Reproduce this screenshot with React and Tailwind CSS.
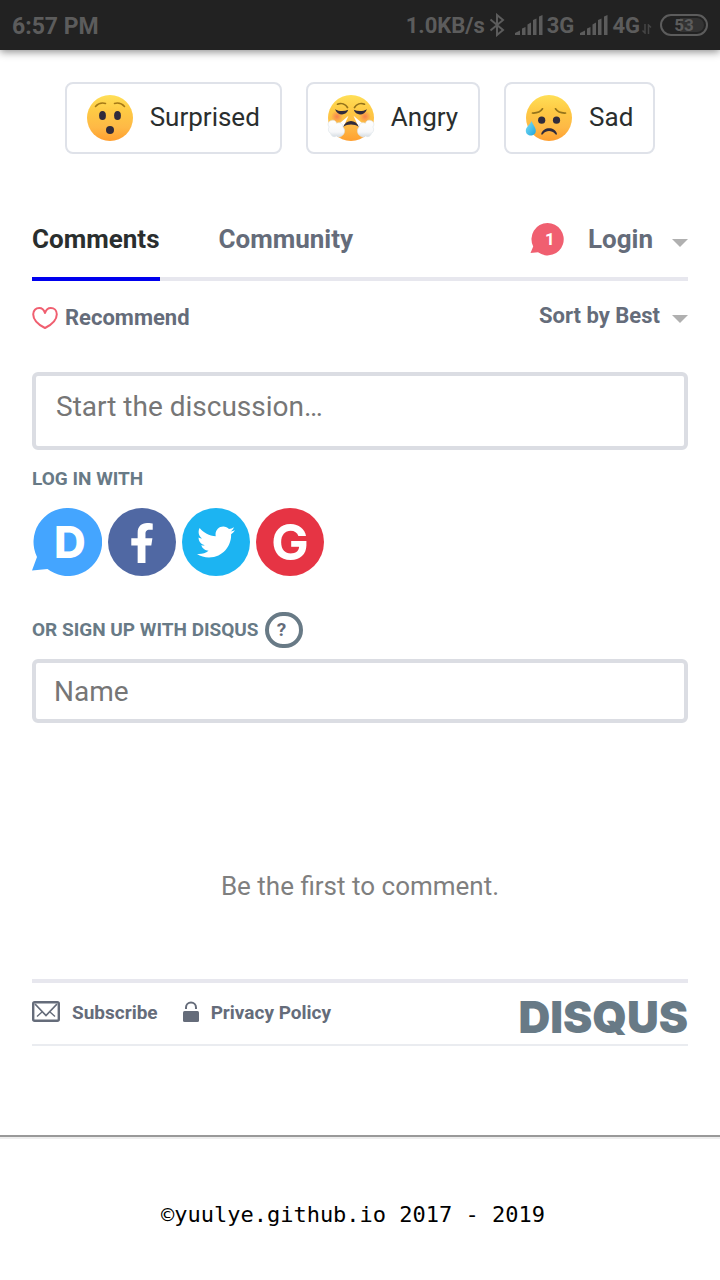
import React from "react";
import { FaFacebookF, FaTwitter } from "react-icons/fa";

function FaceBase({ id, children }) {
  return (
    <svg viewBox="0 0 46 46" className="size-[46px] shrink-0 overflow-visible" aria-hidden="true">
      <defs>
        <linearGradient id={id} x1="0" y1="0" x2="0" y2="1">
          <stop offset="0" stopColor="#ffdf57" />
          <stop offset="0.35" stopColor="#fec944" />
          <stop offset="0.7" stopColor="#feb946" />
          <stop offset="1" stopColor="#ff9f2f" />
        </linearGradient>
      </defs>
      <circle cx="23" cy="23" r="23" fill={`url(#${id})`} />
      {children}
    </svg>
  );
}

function SurprisedFace() {
  return (
    <FaceBase id="face-surprised">
      <g fill="none" stroke="#a57a17" strokeWidth="1.6" strokeLinecap="round">
        <path d="M8.5 11.5C11 8.6 15 7.5 18.5 8.4" />
        <path d="M27.5 8.4C31 7.5 35 8.6 37.5 11.5" />
      </g>
      <ellipse cx="15.5" cy="20.5" rx="3.4" ry="4.6" fill="#302b3c" />
      <ellipse cx="30.5" cy="20.5" rx="3.4" ry="4.6" fill="#302b3c" />
      <circle cx="23" cy="35" r="4" fill="#302b3c" />
    </FaceBase>
  );
}

function AngryFace() {
  return (
    <FaceBase id="face-angry">
      <defs>
        <radialGradient id="blush">
          <stop offset="0" stopColor="#f56d51" stopOpacity="0.75" />
          <stop offset="1" stopColor="#f56d51" stopOpacity="0" />
        </radialGradient>
        <linearGradient id="steam" x1="0" y1="0" x2="0" y2="1">
          <stop offset="0" stopColor="#ffffff" />
          <stop offset="0.7" stopColor="#f7f8fa" />
          <stop offset="1" stopColor="#d5dce2" />
        </linearGradient>
      </defs>
      <circle cx="9" cy="21.5" r="6" fill="url(#blush)" />
      <circle cx="37" cy="21.5" r="6" fill="url(#blush)" />
      <g fill="none" stroke="#94731b" strokeWidth="1.7" strokeLinecap="round">
        <path d="M9.5 9.2C13.5 7.6 17.5 9.2 19.5 12.5" />
        <path d="M36.5 9.2C32.5 7.6 28.5 9.2 26.5 12.5" />
      </g>
      <path d="M7 14.2C11 16.6 16 16.6 20.2 14.8C18.5 21 9.5 21.2 7 14.2Z" fill="#302b3c" />
      <path d="M39 14.2C35 16.6 30 16.6 25.8 14.8C27.5 21 36.5 21.2 39 14.2Z" fill="#302b3c" />
      <path d="M20.5 20.8L15 33L9 30.5Z" fill="#fff" />
      <path d="M25.5 20.8L31 33L37 30.5Z" fill="#fff" />
      <path d="M15 32C18 24 28 24 31 32C26 28.8 20 28.8 15 32Z" fill="#302b3c" />
      <g fill="url(#steam)" stroke="#dce2e7" strokeWidth="0.6">
        <path d="M2.5 25.8C5.5 24.3 8 25.8 8.5 28.3C12 26.6 15.3 28.8 14.8 32.2C17.5 34 17 39 14 40.6C12.6 42.7 9.6 42 8.4 41C6 42.6 3 41 2.8 38.5C.3 37.2-.3 34 1.2 32C-.8 29.7.2 26.8 2.5 25.8Z" />
        <path d="M43.5 25.8C40.5 24.3 38 25.8 37.5 28.3C34 26.6 30.7 28.8 31.2 32.2C28.5 34 29 39 32 40.6C33.4 42.7 36.4 42 37.6 41C40 42.6 43 41 43.2 38.5C45.7 37.2 46.3 34 44.8 32C46.8 29.7 45.8 26.8 43.5 25.8Z" />
      </g>
    </FaceBase>
  );
}

function SadFace() {
  return (
    <FaceBase id="face-sad">
      <defs>
        <linearGradient id="tear" x1="0" y1="0" x2="1" y2="1">
          <stop offset="0" stopColor="#7ee0f7" />
          <stop offset="1" stopColor="#20a5dc" />
        </linearGradient>
      </defs>
      <g fill="none" stroke="#94731b" strokeWidth="1.7" strokeLinecap="round">
        <path d="M6.5 18C10.5 18.2 14.5 16.8 16.5 13.8" />
        <path d="M39.5 18C35.5 18.2 31.5 16.8 29.5 13.8" />
      </g>
      <circle cx="15.7" cy="25.2" r="3.6" fill="#302b3c" />
      <circle cx="30.5" cy="25.2" r="3.6" fill="#302b3c" />
      <path
        d="M15.2 39C17.2 31.4 29.2 31.4 31 39C30.6 40.2 29.8 39.8 29 38.8C25.8 35.2 20.2 35.2 17.2 38.8C16.3 39.9 15.5 40.2 15.2 39Z"
        fill="#302b3c"
      />
      <path d="M5.6 26C6.6 29.6 10 32.4 9.8 36C9.6 42-.2 42-.2 35.7C-.2 32 4.3 29.4 5.6 26Z" fill="url(#tear)" />
    </FaceBase>
  );
}

function Signal() {
  return (
    <svg viewBox="0 0 28 20" className="h-5 w-7 shrink-0" fill="#5c5c5c" aria-hidden="true">
      <path d="M0 20V18L5 15.5V20ZM7 13.5L10.5 12V20H7ZM12.5 9.5L16 7.5V20H12.5ZM18 5L21.5 3.5V20H18ZM24 1.5L27.5 0V20H24Z" />
    </svg>
  );
}

function StatusBar() {
  return (
    <header className="flex h-[50px] items-center justify-between bg-[#222222] px-3 text-[23px] leading-none font-bold text-[#5c5c5c] shadow-[0_2px_8px_rgba(0,0,0,0.45)]">
      <span className="pt-0.5">6:57 PM</span>
      <div className="flex items-center text-[22px]">
        <span className="pt-0.5">1.0KB/s</span>
        <svg viewBox="0 0 16 24" className="mr-2.5 ml-1 h-6 w-4" fill="none" stroke="#5c5c5c" strokeWidth="2" aria-hidden="true">
          <path d="M1.5 6.5L14 17L8 22V2L14 7L1.5 17.5" />
        </svg>
        <Signal />
        <span className="mr-1.5 ml-1 pt-0.5">3G</span>
        <Signal />
        <span className="ml-1 pt-0.5">4G</span>
        <svg viewBox="0 0 10 10" className="mt-2 ml-0.5 h-2.5 w-2.5" fill="none" stroke="#454545" strokeWidth="1.5" aria-hidden="true">
          <path d="M3 0V9L0.5 6.5M6.5 10V1L9 3.5" />
        </svg>
        <span className="relative ml-2 flex h-[22px] w-12 items-center justify-center rounded-full border-2 border-[#5c5c5c] text-[17px] leading-none">
          <span className="absolute inset-y-0.5 right-0.5 w-6 rounded-r-full bg-[#333333]" />
          <span className="relative">53</span>
        </span>
      </div>
    </header>
  );
}

function Reaction({ face, label }) {
  return (
    <button
      type="button"
      className="flex h-[72px] items-center gap-[17px] rounded-lg border-2 border-[#dfe2e9] px-5 text-[26px] leading-8 text-[#2a2e2e]"
    >
      {face}
      <span className="pb-0.5">{label}</span>
    </button>
  );
}

function Caret() {
  return (
    <svg viewBox="0 0 16 8" className="h-2 w-4 shrink-0" fill="#b0b0b0" aria-hidden="true">
      <path d="M0 0H16L8 8Z" />
    </svg>
  );
}

const circle = "flex size-[68px] items-center justify-center rounded-full text-white";

export default function App() {
  return (
    <div className="min-h-screen bg-white font-['Roboto',sans-serif] text-[#656c7a]">
      <StatusBar />

      <main>
        <div className="flex justify-center gap-6 pt-8">
          <Reaction face={<SurprisedFace />} label="Surprised" />
          <Reaction face={<AngryFace />} label="Angry" />
          <Reaction face={<SadFace />} label="Sad" />
        </div>

        <section className="px-8 pt-[66px]">
          <nav className="flex h-[61px] justify-between border-b-4 border-[#e7e7ee] text-[26px] leading-[38px] font-bold">
            <div className="flex gap-[59px]">
              <a href="#comments" className="-mb-1 border-b-4 border-[#0000ee] text-[#2a2e2e]">
                Comments
              </a>
              <a href="#community">Community</a>
            </div>
            <div className="flex h-[38px] items-center">
              <button type="button" aria-label="1 notification" className="relative mr-6 size-[34px]">
                <svg viewBox="0 0 34 34" className="size-[34px]" fill="#f05f70" aria-hidden="true">
                  <path d="M17.5 1A16.2 16.2 0 1 1 8 30.3L0.5 31L3.2 24.5A16.2 16.2 0 0 1 17.5 1Z" />
                </svg>
                <span className="absolute inset-0 pl-1.5 text-center text-[17px] leading-[34px] text-white">1</span>
              </button>
              <button type="button" className="flex items-center gap-[19px]">
                Login
                <span className="pt-2">
                  <Caret />
                </span>
              </button>
            </div>
          </nav>

          <div className="flex items-start justify-between pt-[21px] text-[22px] leading-7 font-bold">
            <button type="button" className="flex items-center gap-[7px] pt-0.5">
              <svg viewBox="0 0 26 22" className="h-[22px] w-[26px]" fill="none" stroke="#f05f70" strokeWidth="2" strokeLinejoin="round" aria-hidden="true">
                <path d="M13 6C12 2.8 9.8 1 7.2 1C3.8 1 1.2 3.5 1.2 7.2C1.2 12.5 6 17.5 13 21C20 17.5 24.8 12.5 24.8 7.2C24.8 3.5 22.2 1 18.8 1C16.2 1 14 2.8 13 6Z" />
              </svg>
              Recommend
            </button>
            <button type="button" className="flex items-center gap-3">
              Sort by Best
              <span className="pt-1.5">
                <Caret />
              </span>
            </button>
          </div>

          <form onSubmit={(e) => e.preventDefault()}>
            <textarea
              aria-label="Start the discussion"
              rows={1}
              placeholder="Start the discussion…"
              className="mt-10 block h-[78px] w-full resize-none rounded-md border-4 border-[#dbdde3] px-5 pt-[13px] text-[28px] leading-9 placeholder:text-[#767676]"
            />

            <h2 className="mt-[17px] text-[19px] leading-6 font-bold text-[#687a86]">LOG IN WITH</h2>
            <div className="mt-[17px] flex gap-1.5">
              <button type="button" aria-label="Disqus" className="relative h-[68px] w-[70px] text-white">
                <svg viewBox="0 0 70 68" className="h-[68px] w-[70px]" fill="#44a5ff" aria-hidden="true">
                  <path d="M36 0A34 34 0 1 1 15.5 61L0 62.5L5 49A34 34 0 0 1 36 0Z" />
                </svg>
                <span className="absolute inset-0 pl-1.5 text-center font-['Inter',sans-serif] text-[44px] leading-[68px] font-extrabold">D</span>
              </button>
              <button type="button" aria-label="Facebook" className={`${circle} bg-[#5068a3]`}>
                <FaFacebookF className="mt-0.5 size-10" />
              </button>
              <button type="button" aria-label="Twitter" className={`${circle} bg-[#1cb4f2]`}>
                <FaTwitter className="size-[38px]" />
              </button>
              <button
                type="button"
                aria-label="Google"
                className={`${circle} bg-[#e63444] font-['Inter',sans-serif] text-[50px] leading-none font-bold`}
              >
                G
              </button>
            </div>

            <div className="mt-9 flex items-center gap-1.5 text-[19px] font-bold text-[#687a86]">
              <h2>OR SIGN UP WITH DISQUS</h2>
              <button type="button" className="flex h-9 w-[38px] items-center justify-center rounded-full border-4 border-[#687a86] pr-1 pb-0.5 text-[19px] leading-none text-[#656c7a]">
                ?
              </button>
            </div>
            <input
              type="text"
              aria-label="Name"
              placeholder="Name"
              className="mt-[11px] block h-16 w-full rounded-md border-4 border-[#dbdde3] px-[18px] text-[28px] leading-9 placeholder:text-[#767676]"
            />
          </form>

          <p className="pt-[147px] text-center text-[26px] leading-8 text-[#7f7f7f]">Be the first to comment.</p>

          <footer className="mt-[77px] flex h-[67px] items-center justify-between border-t-4 border-b-2 border-t-[#e7e7ee] border-b-[#eaecf0] text-[19px] leading-6 font-bold">
            <div className="flex items-center gap-6 pb-0.5">
              <a href="#subscribe" className="flex items-center gap-3">
                <svg viewBox="0 0 28 21" className="-mt-0.5 h-[21px] w-7" fill="none" stroke="#656c7a" aria-hidden="true">
                  <rect x="1.2" y="1.2" width="25.6" height="18.6" rx="1.5" strokeWidth="2.4" />
                  <path d="M3 3L14 14.5L25 3" strokeWidth="1.8" />
                  <path d="M5 15.5L10 11M23 15.5L18 11" strokeWidth="1.4" />
                </svg>
                Subscribe
              </a>
              <a href="#privacy" className="flex items-center gap-[11px]">
                <svg viewBox="0 0 18 22" className="-mt-0.5 h-[22px] w-[18px]" aria-hidden="true">
                  <rect x="1" y="10" width="16" height="11" rx="1.5" fill="#656c7a" />
                  <path d="M4 8V6.5A5 5 0 0 1 14 6.5V8" fill="none" stroke="#656c7a" strokeWidth="2" />
                </svg>
                Privacy Policy
              </a>
            </div>
            <a href="#disqus" className="pt-1.5 font-['Inter',sans-serif] text-[44px] leading-none font-black text-[#687a86]">
              DISQUS
            </a>
          </footer>
        </section>
      </main>

      <hr className="mt-[89px] border-t-2 border-b-2 border-t-[#999999] border-b-[#eeeeee]" />
      <p className="pt-[60px] pr-3.5 pb-[49px] text-center font-['DejaVu_Sans_Mono',monospace] text-[22px] leading-8 text-black">
        ©yuulye.github.io 2017 - 2019
      </p>
    </div>
  );
}
